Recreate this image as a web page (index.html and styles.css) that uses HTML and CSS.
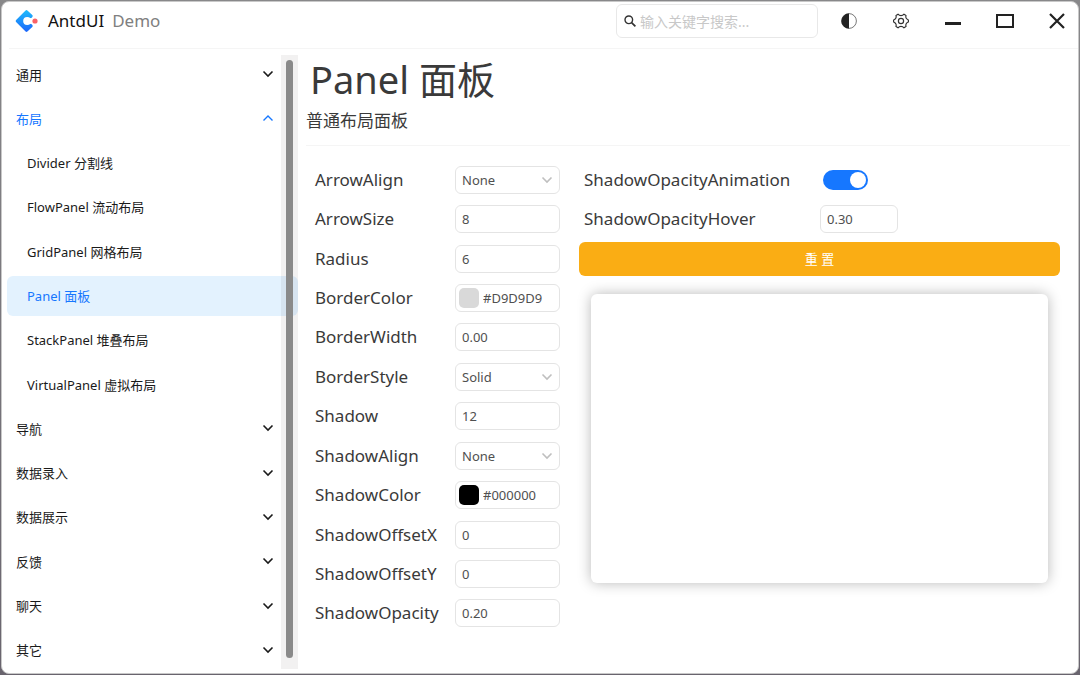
FILE: index.html
```html
<!DOCTYPE html>
<html lang="zh-CN">
<head>
  <meta charset="UTF-8">
  <meta name="viewport" content="width=device-width, initial-scale=1">
  <title>AntdUI Demo</title>
  <link rel="stylesheet" href="styles.css">
</head>
<body>
  <svg class="symbols" aria-hidden="true">
    <symbol id="down" viewBox="0 0 12 12"><path d="M1.5 3.5 L6 8 L10.5 3.5" fill="none" stroke="currentColor" stroke-width="1.6"/></symbol>
    <symbol id="up" viewBox="0 0 12 12"><path d="M1.5 8.5 L6 4 L10.5 8.5" fill="none" stroke="currentColor" stroke-width="1.4"/></symbol>
  </svg>
  <div class="window">
    <header class="titlebar">
      <svg class="logo" viewBox="0 0 24 24" aria-hidden="true">
        <defs>
          <linearGradient id="blue" x1="0" y1="0" x2="0" y2="24" gradientUnits="userSpaceOnUse">
            <stop offset="0" stop-color="#1fc0fb"/>
            <stop offset="1" stop-color="#1b62fb"/>
          </linearGradient>
        </defs>
        <path d="M11.5 2.4 L2 12 L11.5 21.6 L16.4 17 L11.5 12 L16.4 7 Z" fill="url(#blue)" stroke="url(#blue)" stroke-width="2.6" stroke-linejoin="round"/>
        <circle cx="12.2" cy="12" r="4" fill="#fff"/>
        <path d="M12.2 12 L15.5 9 H20 V15 H15.5 Z" fill="#fff"/>
        <circle cx="20" cy="12" r="2.6" fill="#fa6267"/>
      </svg>
      <h1 class="app-name">AntdUI</h1>
      <span class="app-sub">Demo</span>
      <label class="search">
        <svg viewBox="0 0 12 12" aria-hidden="true"><circle cx="4.8" cy="4.8" r="3.8" fill="none" stroke="#333" stroke-width="1.4"/><path d="M7.6 7.6 L11.4 11.4" stroke="#333" stroke-width="1.7"/></svg>
        <input type="text" placeholder="输入关键字搜索..." aria-label="搜索">
      </label>
      <nav class="window-buttons">
        <button type="button" aria-label="Theme"><svg class="icon-sm" viewBox="0 0 16 16"><circle cx="8" cy="8" r="7.4" fill="#fff" stroke="#555" stroke-width=".8"/><path d="M8 .4 A7.6 7.6 0 0 0 8 15.6 Z" fill="#222"/></svg></button>
        <button type="button" aria-label="Settings"><svg class="icon-sm" viewBox="0 0 16 16" fill="none" stroke="#333" stroke-width="1.2" stroke-linejoin="round"><path d="M5 1.2 Q6.2 2.6 8 2.6 T11 1.2 L13 2.4 Q12.5 4.2 13.2 5.3 T15.4 7 V9 Q13.9 9.5 13.2 10.7 T13 13.6 L11 14.8 Q9.8 13.4 8 13.4 T5 14.8 L3 13.6 Q3.5 11.8 2.8 10.7 T.6 9 V7 Q2.1 6.5 2.8 5.3 T3 2.4 Z"/><circle cx="8" cy="8" r="2.6"/></svg></button>
        <button type="button" aria-label="Minimize"><svg viewBox="0 0 18 18"><path d="M1 11.5 H17" stroke="#222" stroke-width="3"/></svg></button>
        <button type="button" aria-label="Maximize"><svg viewBox="0 0 18 18"><rect x="1" y="3" width="16" height="12" fill="none" stroke="#222" stroke-width="2"/></svg></button>
        <button type="button" aria-label="Close"><svg viewBox="0 0 18 18"><path d="M2 2 L16 16 M16 2 L2 16" stroke="#222" stroke-width="2.2"/></svg></button>
      </nav>
    </header>
    <div class="body">
      <aside class="sidebar">
        <nav class="menu">
          <button type="button">通用<svg><use href="#down"/></svg></button>
          <button type="button" class="open">布局<svg><use href="#up"/></svg></button>
          <a href="#divider">Divider 分割线</a>
          <a href="#flowpanel">FlowPanel 流动布局</a>
          <a href="#gridpanel">GridPanel 网格布局</a>
          <a href="#panel" class="selected">Panel 面板</a>
          <a href="#stackpanel">StackPanel 堆叠布局</a>
          <a href="#virtualpanel">VirtualPanel 虚拟布局</a>
          <button type="button">导航<svg><use href="#down"/></svg></button>
          <button type="button">数据录入<svg><use href="#down"/></svg></button>
          <button type="button">数据展示<svg><use href="#down"/></svg></button>
          <button type="button">反馈<svg><use href="#down"/></svg></button>
          <button type="button">聊天<svg><use href="#down"/></svg></button>
          <button type="button">其它<svg><use href="#down"/></svg></button>
        </nav>
        <div class="scrollbar"><div class="thumb"></div></div>
      </aside>
      <main class="content">
        <div class="page-header">
          <h2>Panel 面板</h2>
          <p>普通布局面板</p>
        </div>
        <form class="demo">
          <div class="props">
            <div class="row"><label for="arrowAlign">ArrowAlign</label><div class="field"><select id="arrowAlign"><option>None</option></select><svg><use href="#down"/></svg></div></div>
            <div class="row"><label for="arrowSize">ArrowSize</label><div class="field"><input id="arrowSize" type="text" value="8"></div></div>
            <div class="row"><label for="radius">Radius</label><div class="field"><input id="radius" type="text" value="6"></div></div>
            <div class="row"><label for="borderColor">BorderColor</label><div class="field color"><span class="swatch grey"></span><input id="borderColor" type="text" value="#D9D9D9"></div></div>
            <div class="row"><label for="borderWidth">BorderWidth</label><div class="field"><input id="borderWidth" type="text" value="0.00"></div></div>
            <div class="row"><label for="borderStyle">BorderStyle</label><div class="field"><select id="borderStyle"><option>Solid</option></select><svg><use href="#down"/></svg></div></div>
            <div class="row"><label for="shadow">Shadow</label><div class="field"><input id="shadow" type="text" value="12"></div></div>
            <div class="row"><label for="shadowAlign">ShadowAlign</label><div class="field"><select id="shadowAlign"><option>None</option></select><svg><use href="#down"/></svg></div></div>
            <div class="row"><label for="shadowColor">ShadowColor</label><div class="field color"><span class="swatch black"></span><input id="shadowColor" type="text" value="#000000"></div></div>
            <div class="row"><label for="offsetX">ShadowOffsetX</label><div class="field"><input id="offsetX" type="text" value="0"></div></div>
            <div class="row"><label for="offsetY">ShadowOffsetY</label><div class="field"><input id="offsetY" type="text" value="0"></div></div>
            <div class="row"><label for="opacity">ShadowOpacity</label><div class="field"><input id="opacity" type="text" value="0.20"></div></div>
          </div>
          <div class="preview">
            <div class="row wide"><label for="animation">ShadowOpacityAnimation</label><input id="animation" class="switch" type="checkbox" checked></div>
            <div class="row wide"><label for="hover">ShadowOpacityHover</label><div class="field small"><input id="hover" type="text" value="0.30"></div></div>
            <button type="reset" class="reset">重 置</button>
            <div class="panel"></div>
          </div>
        </form>
      </main>
    </div>
  </div>
</body>
</html>
```

FILE: styles.css
```css
:root {
  --primary: #1677ff;
  --text: #3a3a3a;
  --border: #e4e4e4;
  --split: #f5f5f5;
}
* { box-sizing: border-box; }
body {
  margin: 0;
  height: 100vh;
  padding: 1px;
  background: linear-gradient(to bottom, #88888a, #69646e);
  font-family: "Noto Sans", "Noto Sans CJK SC", sans-serif;
  color: var(--text);
}
button, input, select {
  font: inherit;
  color: inherit;
  margin: 0;
}
button {
  background: none;
  border: none;
  padding: 0;
  cursor: pointer;
}
.symbols {
  position: absolute;
  width: 0;
  height: 0;
}
.window {
  height: 100%;
  display: flex;
  flex-direction: column;
  background: #fff;
  border: 1px solid #c8c8c8;
  border-radius: 8px;
  overflow: hidden;
}

/* title bar */
.titlebar {
  display: flex;
  align-items: center;
  height: 47px;
  flex: none;
  margin: 0 0 0 7px;
  padding: 0 0 8px 6px;
  border-bottom: 1px solid var(--split);
}
.logo {
  width: 24px;
  height: 24px;
  margin-right: 9px;
}
.app-name, .app-sub {
  font-size: 17px;
  font-weight: 400;
  line-height: 24px;
  margin: 0;
}
.app-name {
  color: #111;
  margin-right: 8px;
}
.app-sub { color: #808080; }
.search {
  display: flex;
  align-items: center;
  gap: 4px;
  width: 202px;
  height: 34px;
  margin-left: auto;
  padding: 0 7px;
  border: 1px solid #e8e8e8;
  border-radius: 6px;
}
.search svg {
  width: 12px;
  height: 12px;
  flex: none;
}
.search input {
  flex: 1;
  min-width: 0;
  border: none;
  outline: none;
  padding: 0;
  background: none;
  font-size: 14px;
}
.search input::placeholder { color: #c8c8c8; }
.window-buttons {
  display: flex;
  width: 260px;
  padding-left: 5px;
}
.window-buttons button {
  flex: 1 0 auto;
  display: flex;
  align-items: center;
  justify-content: center;
  width: 52px;
  height: 36px;
}
.window-buttons svg {
  width: 18px;
  height: 18px;
}
.window-buttons .icon-sm {
  width: 16px;
  height: 16px;
}

/* sidebar */
.body {
  flex: 1;
  min-height: 0;
  display: flex;
}
.sidebar {
  position: relative;
  width: 296px;
  flex: none;
  padding: 6px 0 3px 5px;
}
.menu {
  height: 100%;
  display: flex;
  flex-direction: column;
  gap: 5px;
}
.menu button, .menu a {
  flex: 1;
  display: flex;
  align-items: center;
  justify-content: space-between;
  padding: 0 24px 1px 9px;
  border-radius: 6px;
  font-size: 13px;
  color: #1a1a1a;
  text-decoration: none;
}
.menu a { padding-left: 20px; }
.menu svg {
  width: 12px;
  height: 12px;
}
.menu .open { color: var(--primary); }
.menu .selected {
  background: #e3f2fe;
  color: var(--primary);
}
.scrollbar {
  position: absolute;
  top: 6px;
  right: 0;
  bottom: 4px;
  width: 17px;
  padding: 5px 5px 11px;
  background: rgba(40, 20, 20, .06);
}
.thumb {
  width: 7px;
  height: 100%;
  border-radius: 4px;
  background: #8a8a8a;
}

/* page */
.content {
  flex: 1;
  min-width: 0;
  display: flex;
  flex-direction: column;
  padding: 0 8px 40px;
}
.page-header {
  height: 97px;
  padding-top: 4px;
  border-bottom: 1px solid var(--split);
}
.page-header h2 {
  margin: 0 0 0 4px;
  font-size: 38px;
  font-weight: 400;
  line-height: 52px;
}
.page-header p {
  margin: 4px 0 0;
  font-size: 17px;
  line-height: 24px;
}
.demo {
  flex: 1;
  display: flex;
  gap: 19px;
  padding: 14px 10px 0 9px;
}
.props {
  width: 245px;
  flex: none;
  display: flex;
  flex-direction: column;
}
.row {
  flex: 1;
  display: flex;
  align-items: center;
  justify-content: space-between;
}
.row label {
  font-size: 17px;
  line-height: 24px;
}
.field {
  position: relative;
  display: flex;
  align-items: center;
  width: 105px;
  height: 28px;
  border: 1px solid var(--border);
  border-radius: 6px;
  font-size: 13px;
  color: #505050;
}
.field.small { width: 78px; }
.field input, .field select {
  width: 100%;
  height: 100%;
  min-width: 0;
  padding: 0 6px;
  border: none;
  outline: none;
  background: none;
  appearance: none;
}
.field svg {
  position: absolute;
  right: 6px;
  width: 12px;
  height: 12px;
  color: #bfbfbf;
  pointer-events: none;
}
.color { padding-left: 3px; }
.color input { padding: 0 0 0 4px; }
.swatch {
  width: 20px;
  height: 20px;
  flex: none;
  border-radius: 5px;
}
.swatch.grey { background: #d9d9d9; }
.swatch.black { background: #000; }
.preview {
  flex: 1;
  min-width: 0;
  display: flex;
  flex-direction: column;
}
.row.wide {
  flex: none;
  justify-content: flex-start;
  height: 39px;
  padding-left: 5px;
}
.wide label { width: 236px; }
.switch {
  appearance: none;
  display: flex;
  justify-content: flex-end;
  width: 45px;
  height: 20px;
  margin-left: 3px;
  padding: 2px;
  border-radius: 10px;
  background: var(--primary);
}
.switch::before {
  content: "";
  width: 16px;
  height: 16px;
  border-radius: 50%;
  background: #fff;
}
.switch:not(:checked) {
  justify-content: flex-start;
  background: #bfbfbf;
}
.reset {
  height: 34px;
  margin-top: 4px;
  padding-bottom: 2px;
  border-radius: 6px;
  background: #faad14;
  color: #fff;
  font-size: 13px;
}
.panel {
  flex: 1;
  margin: 18px 12px 50px;
  border-radius: 6px;
  background: #fff;
  box-shadow: 0 0 14px rgba(0, 0, 0, .28);
}
```
